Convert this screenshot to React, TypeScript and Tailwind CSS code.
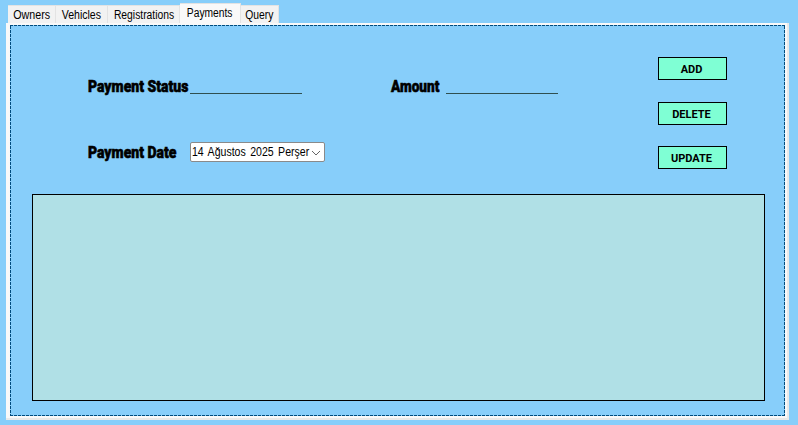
import React from "react";

const tabs = [
  { label: "Owners", box: "w-[48px] h-[18px] pt-[2px]", text: "scale-x-[0.89]" },
  { label: "Vehicles", box: "w-[52px] h-[18px] pt-[2px]", text: "scale-x-[0.88]" },
  { label: "Registrations", box: "w-[72px] h-[18px] pt-[2px] pl-px", text: "scale-x-[0.86]" },
  { label: "Payments", box: "w-[61px] h-[20px] pt-[2px]", text: "scale-x-[0.855]", active: true },
  { label: "Query", box: "w-[38px] h-[18px] pt-[2px] pr-px", text: "scale-x-[0.86]" },
];

function Label({ children, className }: { children: React.ReactNode; className: string }) {
  return (
    <span
      className={`-mt-px block origin-left whitespace-nowrap font-['Roboto',sans-serif] text-[17px] leading-5 font-black text-black [-webkit-text-stroke:0.6px_black] ${className}`}
    >
      {children}
    </span>
  );
}

function ActionButton({ children }: { children: React.ReactNode }) {
  return (
    <button className="flex h-[23px] w-[69px] items-center justify-center border border-black bg-[#7fffd4] pt-[2px] pr-[2px] font-['Roboto',sans-serif] text-[11px] leading-5 font-bold text-black">
      {children}
    </button>
  );
}

const dashX = "h-px shrink-0 bg-[repeating-linear-gradient(90deg,#004b7d_0_3px,#87cefa_3px_4px)]";
const dashY = "w-px shrink-0 bg-[repeating-linear-gradient(180deg,#004b7d_0_3px,#87cefa_3px_4px)]";

export default function App() {
  return (
    <div className="h-[425px] w-[798px] overflow-hidden bg-[#87cefa] pt-[3px] pl-[6px] font-['Liberation_Sans',Arial,sans-serif] text-black">
      <div className="flex h-[20px] items-end pl-[2px]">
        {tabs.map((t) => (
          <div
            key={t.label}
            className={`flex shrink-0 justify-center border-t border-r border-[#e3e3e3] ${t.box} ${t.active ? "bg-[#f9f9f9]" : "bg-[#f2f2f2]"}`}
          >
            <span className={`text-[12px] leading-[15px] whitespace-nowrap ${t.text}`}>{t.label}</span>
          </div>
        ))}
      </div>

      <div className="h-[397px] w-[783px] border-r-2 border-b-2 border-[#e9e9e9] bg-[#f9f9f9] pt-[2px] pl-[4px]">
        <div className="flex h-[391px] w-[775px] flex-col bg-[#87cefa]">
          <div className={dashX} />
          <div className="flex grow">
            <div className={dashY} />
            <div className="flex grow flex-col pt-[31px] pl-[21px]">
              <div className="flex h-[137px] pl-[56px]">
                <div className="flex w-[302px] flex-col pt-[20px]">
                  <div className="flex h-[65px]">
                    <div className="w-[102px]"><Label className="scale-x-[0.823]">Payment Status</Label></div>
                    <div className="h-[17px] w-[112px] border-b border-[#2f4f4f]" />
                  </div>
                  <div className="flex">
                    <div className="w-[102px] pt-px"><Label className="scale-x-[0.823]">Payment Date</Label></div>
                    <div className="flex h-[20px] w-[135px] items-center rounded-[2px] border border-[#8a8a8a] bg-white pl-px">
                      <div className="w-[119px]">
                        <span className="block w-max origin-left scale-x-[0.88] text-[12px] leading-[17px] [word-spacing:1.7px] whitespace-pre">14 Ağustos 2025 Perşer</span>
                      </div>
                      <svg className="mt-px h-[6px] w-[10px] shrink-0" viewBox="0 0 10 6" fill="none" stroke="#666" strokeWidth="1">
                        <path d="M1 1 L5 5 L9 1" />
                      </svg>
                    </div>
                  </div>
                </div>
                <div className="flex w-[268px] pt-[20px]">
                  <div className="w-[56px] pl-px"><Label className="scale-x-[0.8]">Amount</Label></div>
                  <div className="h-[17px] w-[112px] border-b border-[#2f4f4f]" />
                </div>
                <div className="flex flex-col">
                  <div className="h-[45px]"><ActionButton>ADD</ActionButton></div>
                  <div className="h-[44px]"><ActionButton>DELETE</ActionButton></div>
                  <ActionButton>UPDATE</ActionButton>
                </div>
              </div>
              <div className="h-[207px] w-[733px] border border-black bg-[#b0e0e6]" />
            </div>
            <div className={dashY} />
          </div>
          <div className={dashX} />
        </div>
      </div>
    </div>
  );
}
